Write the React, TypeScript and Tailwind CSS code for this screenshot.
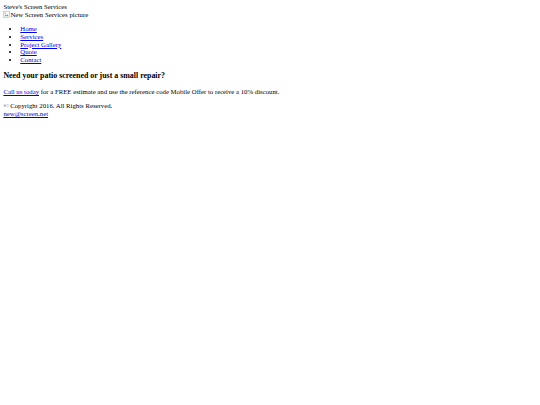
export default function App() {
  return (
    <div
      className="min-h-[405px] bg-white p-[3.4px] text-[6.75px] leading-[7.6px] text-black"
      style={{ fontFamily: '"Liberation Serif", "Times New Roman", serif' }}
    >
      <div>Steve's Screen Services</div>
      <div className="flex items-center">
        <svg className="h-[7px] w-[7px] shrink-0" viewBox="0 0 16 16">
          <rect x="1.5" y="1.5" width="13" height="13" fill="#fff" stroke="#999" />
          <path d="M3 12l3-4 2 2 2-3 3 5z" fill="#6a9" />
          <circle cx="5" cy="5" r="1.5" fill="#c66" />
        </svg>
        <span>New Screen Services picture</span>
      </div>

      <ul className="my-[6.75px] list-disc pl-[16.9px]">
        <li><a href="#" className="text-[#0000ee] underline">Home</a></li>
        <li><a href="#" className="text-[#0000ee] underline">Services</a></li>
        <li><a href="#" className="text-[#0000ee] underline">Project Gallery</a></li>
        <li><a href="#" className="text-[#0000ee] underline">Quote</a></li>
        <li><a href="#" className="text-[#0000ee] underline">Contact</a></li>
      </ul>

      <h3 className="my-[7.9px] text-[7.9px] font-bold leading-[9px]">
        Need your patio screened or just a small repair?
      </h3>

      <p className="my-[6.75px]">
        <a href="#" className="text-[#0000ee] underline">Call us today</a> for a FREE estimate and use
        the reference code Mobile Offer to receive a 10% discount.
      </p>

      <p className="my-[6.75px]">
        © Copyright 2016. All Rights Reserved.
        <br />
        <a href="#" className="text-[#0000ee] underline">new@screen.net</a>
      </p>
    </div>
  );
}
